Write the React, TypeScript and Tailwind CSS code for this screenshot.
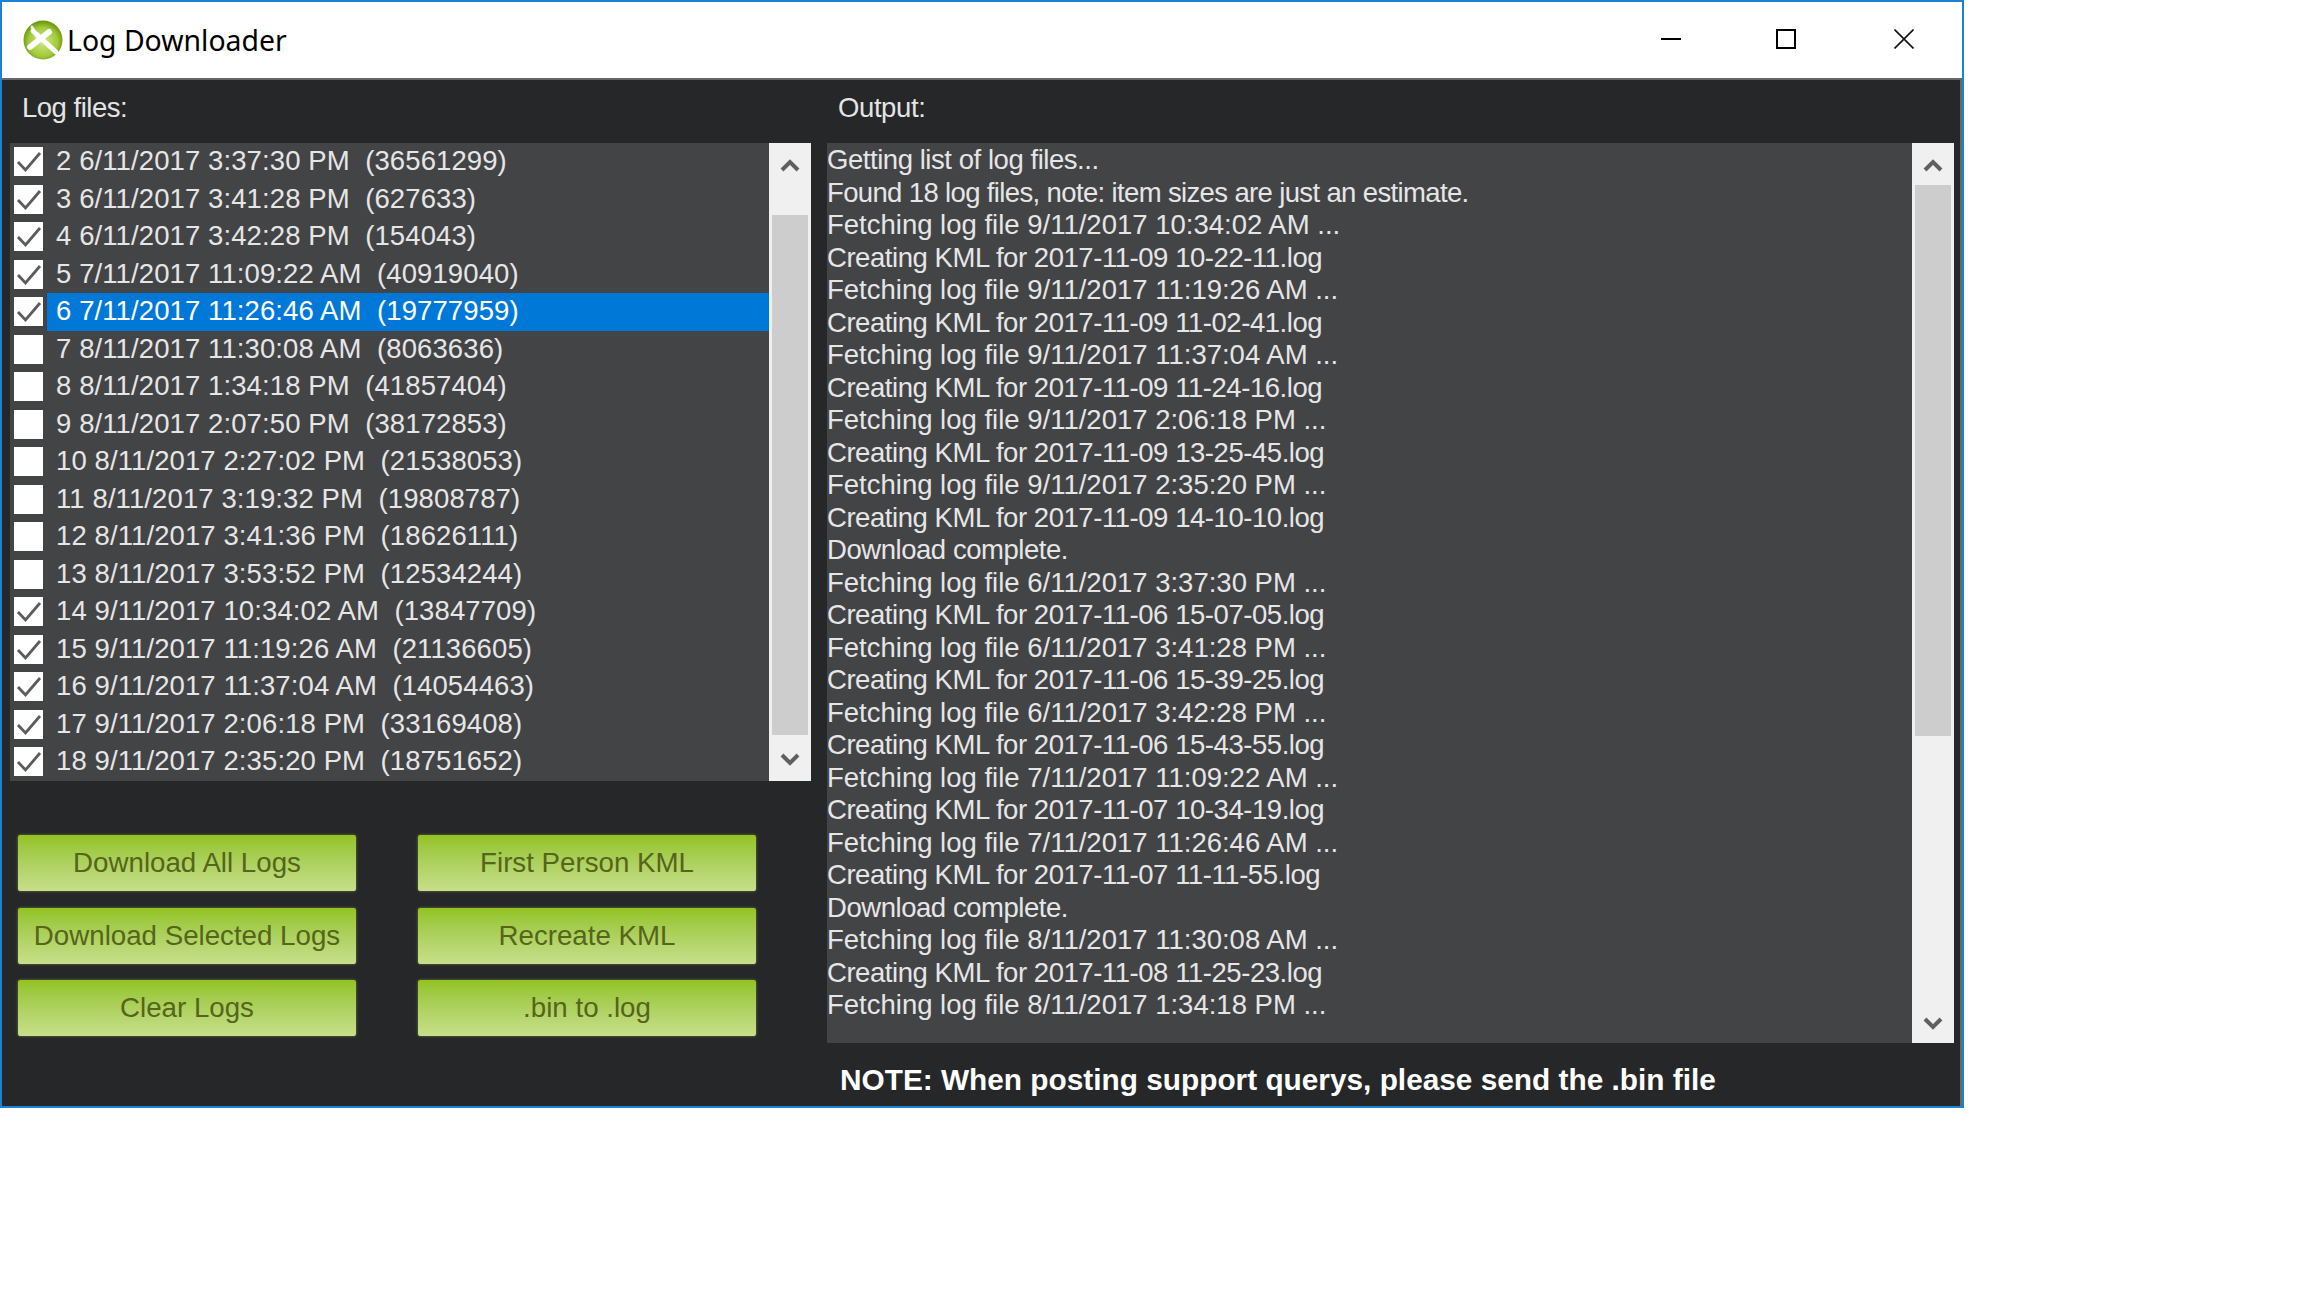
import React from 'react';

const logFiles = [
  { text: '2 6/11/2017 3:37:30 PM  (36561299)', checked: true },
  { text: '3 6/11/2017 3:41:28 PM  (627633)', checked: true },
  { text: '4 6/11/2017 3:42:28 PM  (154043)', checked: true },
  { text: '5 7/11/2017 11:09:22 AM  (40919040)', checked: true },
  { text: '6 7/11/2017 11:26:46 AM  (19777959)', checked: true, selected: true },
  { text: '7 8/11/2017 11:30:08 AM  (8063636)', checked: false },
  { text: '8 8/11/2017 1:34:18 PM  (41857404)', checked: false },
  { text: '9 8/11/2017 2:07:50 PM  (38172853)', checked: false },
  { text: '10 8/11/2017 2:27:02 PM  (21538053)', checked: false },
  { text: '11 8/11/2017 3:19:32 PM  (19808787)', checked: false },
  { text: '12 8/11/2017 3:41:36 PM  (18626111)', checked: false },
  { text: '13 8/11/2017 3:53:52 PM  (12534244)', checked: false },
  { text: '14 9/11/2017 10:34:02 AM  (13847709)', checked: true },
  { text: '15 9/11/2017 11:19:26 AM  (21136605)', checked: true },
  { text: '16 9/11/2017 11:37:04 AM  (14054463)', checked: true },
  { text: '17 9/11/2017 2:06:18 PM  (33169408)', checked: true },
  { text: '18 9/11/2017 2:35:20 PM  (18751652)', checked: true },
];

const outputLines = [
  'Getting list of log files...',
  'Found 18 log files, note: item sizes are just an estimate.',
  'Fetching log file 9/11/2017 10:34:02 AM ...',
  'Creating KML for 2017-11-09 10-22-11.log',
  'Fetching log file 9/11/2017 11:19:26 AM ...',
  'Creating KML for 2017-11-09 11-02-41.log',
  'Fetching log file 9/11/2017 11:37:04 AM ...',
  'Creating KML for 2017-11-09 11-24-16.log',
  'Fetching log file 9/11/2017 2:06:18 PM ...',
  'Creating KML for 2017-11-09 13-25-45.log',
  'Fetching log file 9/11/2017 2:35:20 PM ...',
  'Creating KML for 2017-11-09 14-10-10.log',
  'Download complete.',
  'Fetching log file 6/11/2017 3:37:30 PM ...',
  'Creating KML for 2017-11-06 15-07-05.log',
  'Fetching log file 6/11/2017 3:41:28 PM ...',
  'Creating KML for 2017-11-06 15-39-25.log',
  'Fetching log file 6/11/2017 3:42:28 PM ...',
  'Creating KML for 2017-11-06 15-43-55.log',
  'Fetching log file 7/11/2017 11:09:22 AM ...',
  'Creating KML for 2017-11-07 10-34-19.log',
  'Fetching log file 7/11/2017 11:26:46 AM ...',
  'Creating KML for 2017-11-07 11-11-55.log',
  'Download complete.',
  'Fetching log file 8/11/2017 11:30:08 AM ...',
  'Creating KML for 2017-11-08 11-25-23.log',
  'Fetching log file 8/11/2017 1:34:18 PM ...',
];

const buttons = [
  'Download All Logs',
  'First Person KML',
  'Download Selected Logs',
  'Recreate KML',
  'Clear Logs',
  '.bin to .log',
];

function lineTracking(line: string) {
  if (line.startsWith('Fetching')) return 'tracking-normal';
  if (line.startsWith('Found')) return 'tracking-[-0.64px]';
  return 'tracking-[-0.45px]';
}

function Logo() {
  return (
    <svg width="40" height="40" viewBox="0 0 40 40" className="shrink-0">
      <defs>
        <radialGradient id="logoGreen" cx="50%" cy="55%" r="52%">
          <stop offset="0%" stopColor="#cfe68a" />
          <stop offset="70%" stopColor="#a3cb3a" />
          <stop offset="100%" stopColor="#6f9a14" />
        </radialGradient>
      </defs>
      <circle cx="20" cy="20" r="19.5" fill="url(#logoGreen)" />
      <path d="M10 11L33 32" stroke="#ffffff" strokeWidth="5" strokeLinecap="round" />
      <path d="M7 27L26 12" stroke="#ffffff" strokeWidth="6" strokeLinecap="round" />
      <path d="M9 7L15 19" stroke="#ffffff" strokeWidth="3" strokeLinecap="round" opacity="0.8" />
    </svg>
  );
}

function WindowControls() {
  return (
    <div className="flex items-center mb-[2px]">
      <svg width="20" height="20" viewBox="0 0 20 20" className="mr-[95px]">
        <path d="M0 10h20" stroke="#000" strokeWidth="2" />
      </svg>
      <svg width="20" height="20" viewBox="0 0 20 20" className="mr-[98px]">
        <path d="M1 1h18v18H1z" fill="none" stroke="#000" strokeWidth="2" />
      </svg>
      <svg width="20" height="20" viewBox="0 0 20 20">
        <path d="M0.5 0.5l19 19M19.5 0.5l-19 19" stroke="#111" strokeWidth="1.6" />
      </svg>
    </div>
  );
}

function Checkbox({ checked }: { checked: boolean }) {
  return (
    <div className="w-[29px] h-[29px] bg-white shrink-0 ml-[4px] mr-[4px]">
      {checked && (
        <svg width="29" height="29" viewBox="0 0 29 29">
          <path d="M4 15l7.5 8L26 6" fill="none" stroke="#5c5c5c" strokeWidth="2.8" />
        </svg>
      )}
    </div>
  );
}

function Scrollbar({ thumbTop, thumbHeight, downPad }: { thumbTop: string; thumbHeight: string; downPad: string }) {
  return (
    <div className="w-[42px] bg-[#f0f0f0] shrink-0 flex flex-col items-center">
      <div className={`${thumbTop} w-full flex items-start justify-center pt-[15px]`}>
        <svg width="20" height="14" viewBox="0 0 20 14">
          <path d="M2 12l8-8 8 8" fill="none" stroke="#606060" strokeWidth="4" />
        </svg>
      </div>
      <div className={`${thumbHeight} w-[36px] bg-[#cdcdcd]`} />
      <div className="flex-1" />
      <div className={`h-[40px] w-full flex items-end justify-center ${downPad}`}>
        <svg width="20" height="14" viewBox="0 0 20 14">
          <path d="M2 2l8 8 8-8" fill="none" stroke="#606060" strokeWidth="4" />
        </svg>
      </div>
    </div>
  );
}

export default function App() {
  return (
    <div className="min-h-[1296px] bg-white [font-family:'Liberation_Sans',sans-serif]">
      <div className="w-[1964px] h-[1108px] border-2 border-[#1a83d8] flex flex-col">
        {/* Title bar */}
        <div className="h-[76px] bg-white flex items-center justify-between pl-[21px] pr-[48px] shrink-0">
          <div className="flex items-center">
            <Logo />
            <span className="ml-[4px] text-[28.4px] text-black [font-family:'Noto_Sans',sans-serif]">Log Downloader</span>
          </div>
          <WindowControls />
        </div>

        <div className="flex-1 flex bg-[#262729] border-t-2 border-r-2 border-[#66686a] pl-[8px] min-h-0">
          {/* Log files */}
          <div className="w-[801px] shrink-0 flex flex-col">
            <div className="h-[63px] flex items-center pl-[12px] text-[27.5px] tracking-[-0.5px] text-[#e4e4e4] pb-[7px]">Log files:</div>
            <div className="h-[638px] flex bg-[#434446]">
              <div className="flex-1 flex flex-col">
                {logFiles.map((f) => (
                  <div key={f.text} className="h-[37.5px] flex items-center">
                    <Checkbox checked={f.checked} />
                    <div className={`flex-1 h-full flex items-center pl-[9px] pb-[2px] text-[27.5px] tracking-[0.1px] whitespace-pre text-[#e6e6e6] ${f.selected ? 'bg-[#0078d7] text-white' : ''}`}>
                      {f.text}
                    </div>
                  </div>
                ))}
              </div>
              <Scrollbar thumbTop="h-[72px]" thumbHeight="h-[520px]" downPad="pb-[14px]" />
            </div>
            <div className="mt-[54px] ml-[8px] grid grid-cols-[338px_338px] gap-x-[62px] gap-y-[16.5px]">
              {buttons.map((b) => (
                <button
                  key={b}
                  className="h-[56px] rounded-[2px] bg-gradient-to-b from-[#93c31f] to-[#c8df8a] text-[#55651a] text-[27.7px] shadow-[0_0_3px_rgba(120,140,60,0.9)]"
                >
                  {b}
                </button>
              ))}
            </div>
          </div>

          {/* Output */}
          <div className="flex-1 ml-[16px] flex flex-col mr-[6px]">
            <div className="h-[63px] flex items-center pl-[11px] text-[27.5px] tracking-[-0.4px] text-[#e4e4e4] pb-[7px]">Output:</div>
            <div className="h-[900px] flex bg-[#434446]">
              <div className="flex-1 pt-[1px] text-[27.5px] text-[#e6e6e6] leading-[32.5px]">
                {outputLines.map((line, i) => (
                  <div key={i} className={`h-[32.5px] whitespace-pre ${lineTracking(line)}`}>{line}</div>
                ))}
              </div>
              <Scrollbar thumbTop="h-[42px]" thumbHeight="h-[551px]" downPad="pb-[12px]" />
            </div>
            <div className="flex-1 flex items-center pl-[13px] pt-[12px] text-[29.8px] font-bold text-white">
              NOTE: When posting support querys, please send the .bin file
            </div>
          </div>
        </div>
      </div>
    </div>
  );
}
